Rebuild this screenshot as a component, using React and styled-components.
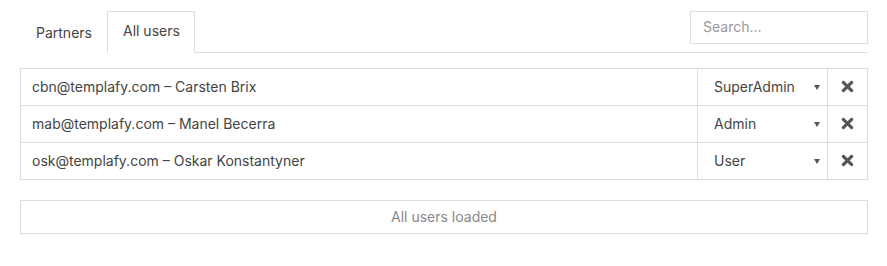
import styled, { createGlobalStyle } from 'styled-components';
import { FaTimes } from 'react-icons/fa';

const Global = createGlobalStyle`
  body { margin: 0; background: #fff; font-family: Inter, Roboto, "Liberation Sans", sans-serif; color: #444; }
`;

const Page = styled.div`
  padding: 11px 20px 0 20px;
  width: 848px;
`;

const TabBar = styled.div`
  display: flex; align-items: flex-end; justify-content: space-between;
  border-bottom: 1px solid #ddd;
  height: 41px;
`;

const Tabs = styled.div`display: flex; align-items: flex-end; height: 100%;`;

const Tab = styled.div`
  box-sizing: border-box;
  padding: 0 14px 0 15px;
  display: flex; align-items: center;
  font-size: 14px; color: #444;
  border: 1px solid ${p => (p.$active ? '#ddd' : 'transparent')};
  border-bottom: ${p => (p.$active ? '1px solid #fff' : 'none')};
  margin-bottom: -1px;
  height: ${p => (p.$active ? '42px' : '41px')};
  padding-bottom: ${p => (p.$active ? '3px' : '2px')};
  background: #fff;
`;

const Search = styled.input`
  align-self: flex-start;
  width: 178px; height: 33px; box-sizing: border-box;
  border: 1px solid #ddd; padding: 0 12px 2px;
  font: 14px Inter, Roboto, "Liberation Sans", sans-serif; color: #444;
  outline: none;
  &::placeholder { color: #999; }
`;

const Table = styled.div`
  margin-top: 15px;
  border: 1px solid #ddd;
`;

const Row = styled.div`
  display: grid; grid-template-columns: 1fr 130px 40px;
  height: 36px;
  & + & { border-top: 1px solid #ddd; }
`;

const NameCell = styled.div`
  display: flex; align-items: center; padding: 0 0 2px 11px;
  font-size: 14px; color: #444;
`;

const SelectCell = styled.div`
  display: flex; align-items: center; justify-content: space-between;
  border-left: 1px solid #ddd;
  padding: 0 7px 2px 16px;
  font-size: 14px; color: #444;
`;

const Arrow = styled.span`
  width: 0; height: 0; margin-top: 2px;
  border-left: 3px solid transparent; border-right: 3px solid transparent;
  border-top: 5px solid #555;
`;

const DeleteCell = styled.div`
  display: flex; align-items: center; justify-content: center;
  border-left: 1px solid #ddd; color: #555; padding-bottom: 2px;
`;

const Footer = styled.div`
  margin-top: 20px; height: 34px; box-sizing: border-box;
  border: 1px solid #ddd; padding-bottom: 2px;
  display: flex; align-items: center; justify-content: center;
  font-size: 14px; color: #888;
`;

const users = [
  { email: 'cbn@templafy.com', name: 'Carsten Brix', role: 'SuperAdmin' },
  { email: 'mab@templafy.com', name: 'Manel Becerra', role: 'Admin' },
  { email: 'osk@templafy.com', name: 'Oskar Konstantyner', role: 'User' },
];

export default function App() {
  return (
    <>
      <Global />
      <Page>
        <TabBar>
          <Tabs>
            <Tab>Partners</Tab>
            <Tab $active>All users</Tab>
          </Tabs>
          <Search placeholder="Search..." />
        </TabBar>
        <Table>
          {users.map(u => (
            <Row key={u.email}>
              <NameCell>{u.email} – {u.name}</NameCell>
              <SelectCell>{u.role}<Arrow /></SelectCell>
              <DeleteCell><FaTimes size={17} /></DeleteCell>
            </Row>
          ))}
        </Table>
        <Footer>All users loaded</Footer>
      </Page>
    </>
  );
}
